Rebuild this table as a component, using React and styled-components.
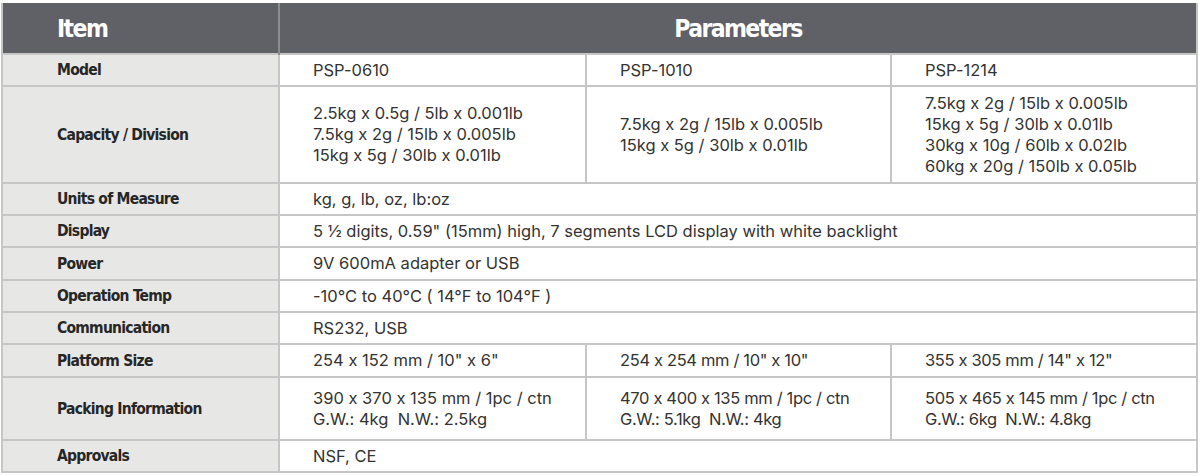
import React from "react";
import styled, { createGlobalStyle } from "styled-components";

const Global = createGlobalStyle`
  html, body { margin: 0; padding: 0; background: #ffffff; }
  body { width: 1200px; height: 476px; overflow: hidden; }
`;

const Wrap = styled.div`
  padding: 3px 0 0 1px;
`;

const Table = styled.table`
  width: 1197px;
  border-collapse: collapse;
  table-layout: fixed;
  border: 2px solid #c6c6c6;
  border-top: none;
`;

const HeadRow = styled.tr`
  height: 51px;
  background: #5f6166;
`;

const HeadCell = styled.th`
  color: #ffffff;
  font-family: "DejaVu Sans Condensed", "DejaVu Sans", sans-serif;
  font-stretch: condensed;
  font-weight: 700;
  font-size: 24.5px;
  letter-spacing: -1.6px;
  text-align: ${(p) => (p.$center ? "center" : "left")};
  padding: 0 0 0 ${(p) => (p.$center ? "0" : "54px")};
  border-left: ${(p) => (p.$center ? "2px solid #8a8c90" : "none")};
  vertical-align: middle;
`;

const Row = styled.tr`
  height: ${(p) => p.$h}px;
`;

const LabelCell = styled.td`
  background: #e7e7e5;
  color: #262626;
  font-family: "DejaVu Sans Condensed", "DejaVu Sans", sans-serif;
  font-stretch: condensed;
  font-weight: 700;
  font-size: 15.5px;
  letter-spacing: -0.75px;
  padding: 0 0 0 54px;
  border: 2px solid #c6c6c6;
  vertical-align: middle;
`;

const ValueCell = styled.td`
  color: #333333;
  font-family: Inter, "Liberation Sans", Arial, sans-serif;
  font-feature-settings: "calt" 0;
  font-size: 16.5px;
  line-height: 21px;
  padding: 0 0 0 33px;
  border: 2px solid #c6c6c6;
  vertical-align: middle;
  white-space: nowrap;
  letter-spacing: ${(p) => (p.$tight ? "-0.35px" : "0")};
`;

const Line = styled.div``;

const models = [
  {
    model: "PSP-0610",
    capacity: ["2.5kg x 0.5g / 5lb x 0.001lb", "7.5kg x 2g / 15lb x 0.005lb", "15kg x 5g / 30lb x 0.01lb"],
    platform: "254 x 152 mm / 10\" x 6\"",
    packing: ["390 x 370 x 135 mm / 1pc / ctn", "G.W.: 4kg  N.W.: 2.5kg"],
  },
  {
    model: "PSP-1010",
    capacity: ["7.5kg x 2g / 15lb x 0.005lb", "15kg x 5g / 30lb x 0.01lb"],
    platform: "254 x 254 mm / 10\" x 10\"",
    packing: ["470 x 400 x 135 mm / 1pc / ctn", "G.W.: 5.1kg  N.W.: 4kg"],
    tight: true,
  },
  {
    model: "PSP-1214",
    capacity: [
      "7.5kg x 2g / 15lb x 0.005lb",
      "15kg x 5g / 30lb x 0.01lb",
      "30kg x 10g / 60lb x 0.02lb",
      "60kg x 20g / 150lb x 0.05lb",
    ],
    platform: "355 x 305 mm / 14\" x 12\"",
    packing: ["505 x 465 x 145 mm / 1pc / ctn", "G.W.: 6kg  N.W.: 4.8kg"],
    tight: true,
  },
];

const Lines = ({ items }) =>
  items.map((t, i) => <Line key={i}>{t.replace(/  /g, "\u00a0\u00a0")}</Line>);

export default function App() {
  return (
    <>
      <Global />
      <Wrap>
        <Table>
          <colgroup>
            <col style={{ width: 277 }} />
            <col style={{ width: 307 }} />
            <col style={{ width: 305 }} />
            <col />
          </colgroup>
          <thead>
            <HeadRow>
              <HeadCell>Item</HeadCell>
              <HeadCell $center colSpan={3}>Parameters</HeadCell>
            </HeadRow>
          </thead>
          <tbody>
            <Row $h={32}>
              <LabelCell>Model</LabelCell>
              {models.map((m) => (
                <ValueCell key={m.model}>{m.model}</ValueCell>
              ))}
            </Row>
            <Row $h={97}>
              <LabelCell>Capacity / Division</LabelCell>
              {models.map((m) => (
                <ValueCell key={m.model}>
                  <Lines items={m.capacity} />
                </ValueCell>
              ))}
            </Row>
            <Row $h={32}>
              <LabelCell>Units of Measure</LabelCell>
              <ValueCell colSpan={3}>kg, g, lb, oz, lb:oz</ValueCell>
            </Row>
            <Row $h={32}>
              <LabelCell>Display</LabelCell>
              <ValueCell colSpan={3}>
                5 ½ digits, 0.59" (15mm) high, 7 segments LCD display with white backlight
              </ValueCell>
            </Row>
            <Row $h={33}>
              <LabelCell>Power</LabelCell>
              <ValueCell colSpan={3}>9V 600mA adapter or USB</ValueCell>
            </Row>
            <Row $h={32}>
              <LabelCell>Operation Temp</LabelCell>
              <ValueCell colSpan={3}>-10°C to 40°C ( 14°F to 104°F )</ValueCell>
            </Row>
            <Row $h={32}>
              <LabelCell>Communication</LabelCell>
              <ValueCell colSpan={3}>RS232, USB</ValueCell>
            </Row>
            <Row $h={33}>
              <LabelCell>Platform Size</LabelCell>
              {models.map((m) => (
                <ValueCell key={m.model} $tight={m.tight}>{m.platform}</ValueCell>
              ))}
            </Row>
            <Row $h={63}>
              <LabelCell>Packing Information</LabelCell>
              {models.map((m) => (
                <ValueCell key={m.model} $tight={m.tight}>
                  <Lines items={m.packing} />
                </ValueCell>
              ))}
            </Row>
            <Row $h={32}>
              <LabelCell>Approvals</LabelCell>
              <ValueCell colSpan={3}>NSF, CE</ValueCell>
            </Row>
          </tbody>
        </Table>
      </Wrap>
    </>
  );
}
